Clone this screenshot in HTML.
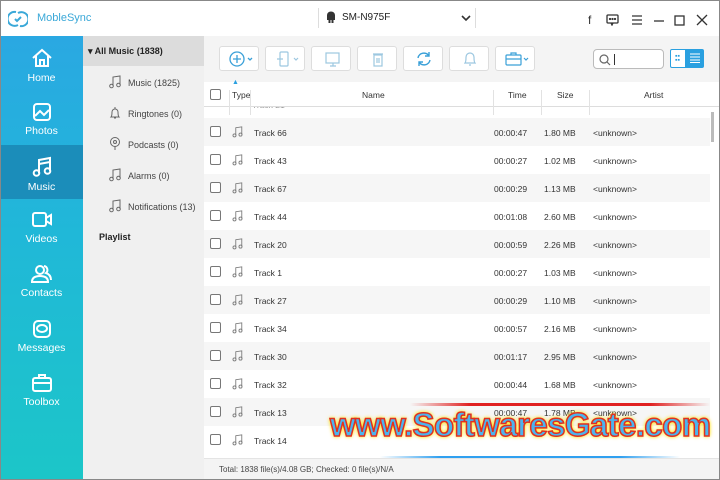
<!DOCTYPE html>
<html><head><meta charset="utf-8"><style>
*{margin:0;padding:0;box-sizing:border-box}
body{width:720px;height:480px;overflow:hidden;background:#fff;font-family:"Liberation Sans",sans-serif;font-size:9px;color:#333;position:relative}
.frame{position:absolute;inset:0;border:1px solid #888;z-index:50;pointer-events:none}
.top{position:absolute;left:0;top:0;width:720px;height:36px;background:#fff}
.side{position:absolute;left:0;top:36px;width:83px;height:444px;background:linear-gradient(#2aa8e2,#20b8d8 45%,#1cc6c8)}
.nav{position:absolute;left:0;width:83px;height:54px;color:#fff;text-align:center;font-size:10.5px}
.nav svg{display:block;margin:11px auto 3px}
.sub{position:absolute;left:83px;top:36px;width:121px;height:444px;background:#f0f0f0}
.sub .it{position:absolute;left:28px;font-size:9px;color:#444}
.sub .it svg{position:absolute;left:-2px;top:-3px}
.sub .it span{position:absolute;left:17px;white-space:nowrap}
.tb{position:absolute;top:46px;height:25px;border:1px solid #ddd;border-radius:3px;background:#fff}
.hd{position:absolute;left:204px;top:82px;width:516px;height:25px;background:#fff;border-bottom:1px solid #ddd;font-size:8.5px}
.hd div{position:absolute;top:8px}
.vl{position:absolute;top:0;width:1px;height:25px;background:#e2e2e2}
.row{position:absolute;left:204px;width:506px;height:28px;font-size:8.5px}
.row div{position:absolute;top:10px;white-space:nowrap}
.cb{position:absolute;width:11px;height:11px;border:1px solid #777;border-radius:2px;background:#fff}
.wm{position:absolute;left:330px;top:406px;font:bold 33px "Liberation Sans",sans-serif;color:#4bb4ee;-webkit-text-stroke:1.5px #e03020;text-shadow:0 0 3px #ff0,0 0 5px #fc0;letter-spacing:-0.6px;z-index:20;white-space:nowrap}
</style></head><body>
<div class="top">
 <svg style="position:absolute;left:8px;top:9px" width="20" height="20" viewBox="0 0 20 20" fill="none" stroke="#3aa8d8" stroke-width="2"><path d="M8 3A7 7 0 1 0 10 16"/><path d="M12 17A7 7 0 1 0 10 4"/><path d="M7 10l2 2 4-4"/></svg>
 <div style="position:absolute;left:37px;top:12px;font-size:11px;color:#3aa8d8">MobleSync</div>
 <div style="position:absolute;left:318px;top:8px;width:1px;height:20px;background:#ddd"></div>
 <svg style="position:absolute;left:326px;top:11px" width="10" height="12" viewBox="0 0 10 12" fill="#333"><rect x="1" y="4" width="8" height="5"/><path d="M1 4a4 3.5 0 0 1 8 0z"/><rect x="2.5" y="9" width="2" height="3"/><rect x="5.5" y="9" width="2" height="3"/></svg>
 <div style="position:absolute;left:342px;top:12px;font-size:10px;color:#222">SM-N975F</div>
 <svg style="position:absolute;left:461px;top:15px" width="10" height="7" viewBox="0 0 10 7" fill="none" stroke="#333" stroke-width="1.6"><path d="M1 1l4 4 4-4"/></svg>
 <div style="position:absolute;left:475px;top:8px;width:1px;height:20px;background:#ddd"></div>
 <div style="position:absolute;left:588px;top:13px;font-size:12px;color:#333">f</div>
 <svg style="position:absolute;left:606px;top:14px" width="13" height="12" viewBox="0 0 13 12" fill="none" stroke="#333" stroke-width="1.3"><rect x="1" y="1" width="11" height="8" rx="1"/><path d="M5 9l1 2 1-2"/><circle cx="4" cy="5" r=".5"/><circle cx="6.5" cy="5" r=".5"/><circle cx="9" cy="5" r=".5"/></svg>
 <svg style="position:absolute;left:632px;top:15px" width="10" height="10" stroke="#333" stroke-width="1.3"><path d="M0 1h10M0 5h10M0 9h10"/></svg>
 <svg style="position:absolute;left:654px;top:15px" width="10" height="10" stroke="#333" stroke-width="1.3"><path d="M0 6h10"/></svg>
 <svg style="position:absolute;left:674px;top:15px" width="11" height="11" fill="none" stroke="#333" stroke-width="1.3"><rect x="1" y="1" width="9" height="9"/></svg>
 <svg style="position:absolute;left:696px;top:14px" width="12" height="12" stroke="#333" stroke-width="1.3"><path d="M1 1l10 10M11 1L1 11"/></svg>
</div>
<div class="side">
 <div class="nav" style="top:0"><svg width="22" height="22" viewBox="0 0 22 22" fill="none" stroke="#fff" stroke-width="2"><path d="M2 11L11 3l9 8M5 9v10h12V9M9 19v-6h4v6"/></svg>Home</div>
 <div class="nav" style="top:55px"><svg width="20" height="20" viewBox="0 0 20 20" fill="none" stroke="#fff" stroke-width="2"><rect x="2" y="2" width="16" height="16" rx="3"/><path d="M3 14l5-5 4 4 5-5"/></svg>Photos</div>
 <div class="nav" style="top:109px;background:#1b8dba"><svg width="20" height="22" viewBox="0 0 20 22" fill="none" stroke="#fff" stroke-width="2"><path d="M7 17V4l11-2v13"/><circle cx="4.5" cy="17" r="2.8"/><circle cx="15.5" cy="15" r="2.8"/><path d="M7 8l11-2"/></svg>Music</div>
 <div class="nav" style="top:163px"><svg width="22" height="20" viewBox="0 0 22 20" fill="none" stroke="#fff" stroke-width="2"><rect x="2" y="3" width="13" height="13" rx="2"/><path d="M15 8l5-3v9l-5-3"/></svg>Videos</div>
 <div class="nav" style="top:217px"><svg width="22" height="20" viewBox="0 0 22 20" fill="none" stroke="#fff" stroke-width="2"><circle cx="9" cy="6" r="4"/><path d="M1 18c0-5 4-6 8-6s8 1 8 6z"/><path d="M13 2a4 4 0 0 1 2 7c3 1 5 3 5 7"/></svg>Contacts</div>
 <div class="nav" style="top:272px"><svg width="20" height="20" viewBox="0 0 20 20" fill="none" stroke="#fff" stroke-width="2"><rect x="2" y="2" width="16" height="16" rx="4"/><ellipse cx="10" cy="9.5" rx="5" ry="3.5"/></svg>Messages</div>
 <div class="nav" style="top:326px"><svg width="22" height="20" viewBox="0 0 22 20" fill="none" stroke="#fff" stroke-width="2"><rect x="2" y="5" width="18" height="13" rx="2"/><path d="M8 5V2h6v3M2 10h18"/></svg>Toolbox</div>
</div>
<div class="sub">
 <div style="position:absolute;left:0;top:0;width:121px;height:30px;background:#dcdcdc"></div>
 <div style="position:absolute;left:5px;top:10px;font-size:9px;font-weight:bold;color:#222">▾ All Music (1838)</div>
 <div class="it" style="top:42px"><svg width="12" height="14" viewBox="0 0 12 14" fill="none" stroke="#666"><path d="M4 11V2l7-1v9"/><circle cx="2.5" cy="11" r="1.8"/><circle cx="9.5" cy="10" r="1.8"/></svg><span>Music (1825)</span></div>
 <div class="it" style="top:73px"><svg width="12" height="14" viewBox="0 0 12 14" fill="none" stroke="#666"><path d="M2 11c1-1 1-3 1-5a3 3 0 0 1 6 0c0 2 0 4 1 5zM5 12h2M6 1v2"/></svg><span>Ringtones (0)</span></div>
 <div class="it" style="top:104px"><svg width="12" height="14" viewBox="0 0 12 14" fill="none" stroke="#666"><circle cx="6" cy="5" r="4.5"/><circle cx="6" cy="5" r="1.5"/><path d="M6 9v4"/></svg><span>Podcasts (0)</span></div>
 <div class="it" style="top:135px"><svg width="12" height="14" viewBox="0 0 12 14" fill="none" stroke="#666"><path d="M4 11V2l7-1v9"/><circle cx="2.5" cy="11" r="1.8"/><circle cx="9.5" cy="10" r="1.8"/></svg><span>Alarms (0)</span></div>
 <div class="it" style="top:166px"><svg width="12" height="14" viewBox="0 0 12 14" fill="none" stroke="#666"><path d="M4 11V2l7-1v9"/><circle cx="2.5" cy="11" r="1.8"/><circle cx="9.5" cy="10" r="1.8"/></svg><span>Notifications (13)</span></div>
 <div style="position:absolute;left:16px;top:196px;font-size:9px;font-weight:bold;color:#222">Playlist</div>
</div>
<div style="position:absolute;left:204px;top:36px;width:516px;height:46px;background:#f4f4f4"></div>
<div class="tb" style="left:219px;width:40px"><svg style="position:absolute;left:9px;top:4px" width="26" height="16" fill="none" stroke="#3aa0d8" stroke-width="1.3"><circle cx="8" cy="8" r="7"/><path d="M8 4v8M4 8h8M19 7l2 2 2-2"/></svg></div>
<div class="tb" style="left:265px;width:40px"><svg style="position:absolute;left:10px;top:4px" width="26" height="16" fill="none" stroke="#9cc7e0" stroke-width="1.2"><rect x="4" y="1" width="8" height="14" rx="1"/><path d="M1 8h6M18 7l2 2 2-2"/></svg></div>
<div class="tb" style="left:311px;width:40px"><svg style="position:absolute;left:12px;top:5px" width="16" height="15" fill="none" stroke="#9cc7e0" stroke-width="1.2"><rect x="2" y="1" width="13" height="10"/><path d="M6 14h6M9 11v3"/></svg></div>
<div class="tb" style="left:357px;width:40px"><svg style="position:absolute;left:15px;top:5px" width="10" height="15" fill="none" stroke="#9cc7e0" stroke-width="1.2"><rect x="1" y="3" width="8" height="11"/><path d="M0 2h10M4 6v5M6 6v5"/></svg></div>
<div class="tb" style="left:403px;width:40px"><svg style="position:absolute;left:11px;top:4px" width="18" height="16" fill="none" stroke="#3aa0d8" stroke-width="1.4"><path d="M3 7a6 6 0 0 1 11-2M15 9a6 6 0 0 1-11 2M14 1v4h-4M4 15v-4h4"/></svg></div>
<div class="tb" style="left:449px;width:40px"><svg style="position:absolute;left:14px;top:4px" width="12" height="16" fill="none" stroke="#9cc7e0" stroke-width="1.2"><path d="M1 12c1-1 1-3 1-6a4 4 0 0 1 8 0c0 3 0 5 1 6zM5 14h2"/></svg></div>
<div class="tb" style="left:495px;width:40px"><svg style="position:absolute;left:9px;top:5px" width="26" height="14" fill="none" stroke="#3aa0d8" stroke-width="1.2"><rect x="1" y="3" width="15" height="10" rx="1"/><path d="M6 3V1h5v2M1 7h15M19 6l2 2 2-2"/></svg></div>
<div style="position:absolute;left:593px;top:49px;width:71px;height:20px;border:1px solid #bbb;border-radius:4px;background:#fff"><svg style="position:absolute;left:5px;top:4px" width="12" height="12" fill="none" stroke="#666" stroke-width="1.2"><circle cx="5" cy="5" r="4"/><path d="M8 8l3 3"/></svg><div style="position:absolute;left:20px;top:4px;width:1px;height:11px;background:#333"></div></div>
<div style="position:absolute;left:670px;top:49px;width:16px;height:19px;border:1px solid #2aa0e0;background:#fff;border-radius:2px 0 0 2px"><div style="position:absolute;left:4px;top:5px;font-size:7px;color:#2aa0e0;line-height:4px">▪▪<br>▪▪</div></div>
<div style="position:absolute;left:686px;top:49px;width:18px;height:19px;background:#2aa0e0;border-radius:0 2px 2px 0"><svg style="position:absolute;left:4px;top:4px" width="10" height="10" stroke="#fff" stroke-width="1"><path d="M0 1h10M0 4h10M0 7h10M0 9.5h10"/></svg></div>
<div class="row" style="top:98px;background:#fff;height:20px"><div style="left:48px;top:2px;color:#999">Track 21</div></div>
<div class="hd">
 <div class="cb" style="left:6px;top:7px"></div>
 <div class="vl" style="left:25px"></div>
 <div style="left:28px;top:-3px;color:#2aa0e0;font-size:7px">▲</div>
 <div style="left:28px">Type</div>
 <div class="vl" style="left:46px"></div>
 <div style="left:158px">Name</div>
 <div class="vl" style="left:289px"></div>
 <div style="left:304px">Time</div>
 <div class="vl" style="left:337px"></div>
 <div style="left:353px">Size</div>
 <div class="vl" style="left:385px"></div>
 <div style="left:440px">Artist</div>
</div>
<div id="rows"></div>
<div style="position:absolute;left:711px;top:112px;width:3px;height:30px;background:#bbb"></div>
<div style="position:absolute;left:204px;top:458px;width:516px;height:22px;background:#f4f4f4;border-top:1px solid #e4e4e4"></div>
<div style="position:absolute;left:219px;top:465px;font-size:8px;color:#444">Total: 1838 file(s)/4.08 GB; Checked: 0 file(s)/N/A</div>
<div style="position:absolute;left:410px;top:403px;width:300px;height:3px;background:linear-gradient(90deg,transparent,#e02020 20%,#e02020 80%,transparent)"></div>
<div style="position:absolute;left:380px;top:456px;width:300px;height:2px;background:linear-gradient(90deg,transparent,#30a0f0 20%,#30a0f0 80%,transparent)"></div>
<div class="wm">www.SoftwaresGate.com</div>
<div class="frame"></div>
<script>
var d=[["Track 66","00:00:47","1.80 MB"],["Track 43","00:00:27","1.02 MB"],["Track 67","00:00:29","1.13 MB"],["Track 44","00:01:08","2.60 MB"],["Track 20","00:00:59","2.26 MB"],["Track 1","00:00:27","1.03 MB"],["Track 27","00:00:29","1.10 MB"],["Track 34","00:00:57","2.16 MB"],["Track 30","00:01:17","2.95 MB"],["Track 32","00:00:44","1.68 MB"],["Track 13","00:00:47","1.78 MB"],["Track 14","","" ]];
var h="";d.forEach(function(r,i){var t=118+i*28;h+='<div class="row" style="top:'+t+'px;background:'+(i%2?'#fff':'#f6f6f6')+'"><span class="cb" style="left:6px;top:8px"></span><svg style="position:absolute;left:28px;top:8px" width="11" height="12" viewBox="0 0 12 14" fill="none" stroke="#777"><path d="M4 11V2l7-1v9"/><circle cx="2.5" cy="11" r="1.8"/><circle cx="9.5" cy="10" r="1.8"/></svg><div style="left:50px">'+r[0]+'</div><div style="left:290px">'+r[1]+'</div><div style="left:340px">'+r[2]+'</div><div style="left:389px">'+(r[1]?'&lt;unknown&gt;':'')+'</div></div>';});
document.getElementById("rows").innerHTML=h;
</script>
</body></html>
